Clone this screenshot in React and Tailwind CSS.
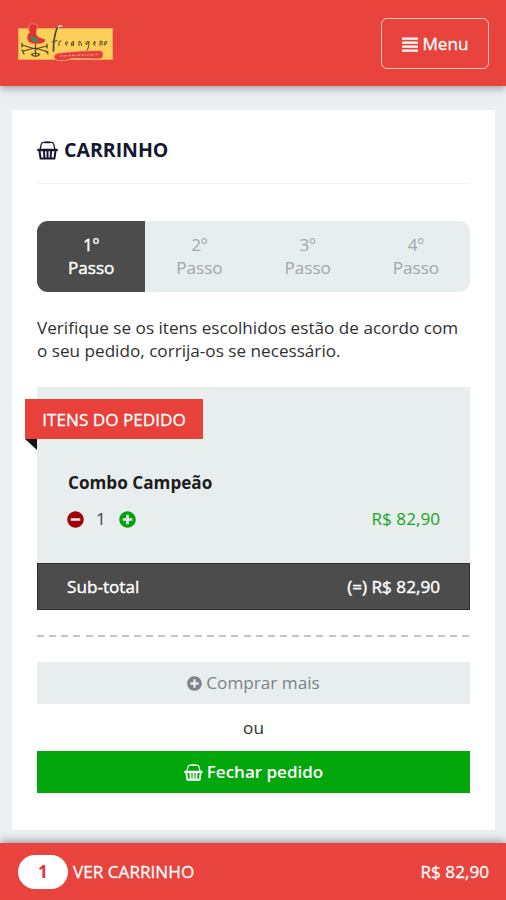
import { FaMinusCircle, FaPlusCircle } from 'react-icons/fa';

const STEPS = ['1º', '2º', '3º', '4º'];

function BasketIcon({ className }) {
  return (
    <svg viewBox="0 0 21 19" fill="none" stroke="currentColor" className={className} aria-hidden>
      <path d="M3.2 8l1.1-4.800q.5-1.900 2.400-1.900h7.600q1.900 0 2.400 1.900l1.100 4.800" strokeWidth="1.3" />
      <path d="M8.500 1.400h4" strokeWidth="1.800" strokeLinecap="round" />
      <path d="M1.300 8.900h18.400" strokeWidth="2.500" strokeLinecap="round" />
      <path d="M2.500 10l1.100 7.600h13.800l1.100-7.600M7 10l.4 7M10.500 10v7M14 10l-.4 7" strokeWidth="2" strokeLinejoin="round" />
    </svg>
  );
}

function MenuIcon() {
  return (
    <svg viewBox="0 0 16 15" fill="currentColor" className="h-[15px] w-4" aria-hidden>
      <rect y="0.5" width="16" height="2.3" rx="0.4" />
      <rect y="4.5" width="16" height="2.3" rx="0.4" />
      <rect y="8.5" width="16" height="2.3" rx="0.4" />
      <rect y="12.5" width="16" height="2.3" rx="0.4" />
    </svg>
  );
}

function Logo() {
  return (
    <svg viewBox="0 0 96 40" className="h-10 w-24" role="img" aria-label="Frangaria">
      <rect x="0.5" y="5.5" width="94" height="31" fill="#fbcf58" stroke="#f3a35c" />
      {/* weathervane */}
      <g fill="none" stroke="#4d4526" strokeWidth="1.2" strokeLinecap="round">
        <path d="M4 22l13 4 12-3M5 28l12-3 13 4M17.5 20v12M13.5 31.5q4-3 8 0q-4 3.5-8 0" />
        <path d="M4 20v4M4 27l2 4M29 21v4M28 28l2 3" />
      </g>
      {/* rooster */}
      <path
        d="M11 5q-1-3 1.500-3q1-2.500 3-1q3-1 4 2l-1 5q-1 4 2 6l7 2.500q0 4.500-9 4.500q-9 0-9.500-6q0-4 3-6l-1.500-1.500z"
        fill="#e6322e"
        stroke="#f9b68e"
        strokeWidth="0.5"
      />
      <path d="M12.500 13.500q3-1 5 1.500l3.500 2.500q-2 2-5 1q-3.500-1-3.500-5z" fill="#24946a" />
      {/* handwritten wordmark */}
      <g fill="none" stroke="#51482b" strokeLinecap="round" strokeLinejoin="round">
        <path d="M35.5 28q0-13 3-21.5q1-3 3-3" strokeWidth="1.7" />
        <path
          d="M34 19l5-1.5M41 22.5v-3.5q1-1 2-1M48 21.5q3-2 1-3q-3 1 0 4M55.5 18.5q-3 0-2 4q2 0 2-4v4M61 22.5v-4q2-1 2.5 4M70 18.5q-3 0-2 3q2 0 3-3q0 8-3 10M76 21.5q3-2 1-3q-3 1 0 4M82 22.5v-4q1-1 2 0"
          strokeWidth="1"
        />
        <path d="M86 18.500v3.500M90.500 18.500q-3 0-2 3.500q2 0 2-3.500" strokeWidth="1" transform="translate(-2)" />
      </g>
      <path d="M40 4.5q2-3 4-1" fill="none" stroke="#e3eee4" strokeWidth="1.4" />
      <path
        d="M37 31.500q2-1.500 8-2q16-2 37-2q4 1 3 5q0 3.500-5 3.500l-26-.5q-6 3-14 2q-3-.5-4-3q0-2 1-3z"
        fill="#e63f3b"
        stroke="#f6b07c"
        strokeWidth="0.8"
      />
      <path d="M42 33l38-1.500" stroke="#f28a78" strokeWidth="1.4" strokeDasharray="2 1 3 1 1 1" />
    </svg>
  );
}

function Header() {
  return (
    <header className="relative flex h-[86px] items-center justify-between bg-[#e8433d] pr-[17px] pl-[18px] shadow-[0_2px_8px_rgba(0,0,0,0.35)]">
      <Logo />
      <button className="mt-px flex h-[51px] w-[108px] items-center justify-center gap-1 rounded-md border-[1.5px] border-[#fdc5be] pt-px pl-px text-white [-webkit-text-stroke:0.3px]">
        <MenuIcon />
        <span>Menu</span>
      </button>
    </header>
  );
}

function Steps() {
  return (
    <ol className="mt-[37px] flex h-[71px] overflow-hidden rounded-[11px] bg-[#e8edee] pb-0 text-center leading-[23px]">
      {STEPS.map((step, i) => (
        <li
          key={step}
          className={
            i === 0
              ? 'flex flex-1 flex-col justify-center bg-[#4c4c4c] pb-0.5 text-white [-webkit-text-stroke:0.4px]'
              : 'flex flex-1 flex-col justify-center pb-0.5 text-[#a3a6a7]'
          }
        >
          <span>{step}</span>
          <span>Passo</span>
        </li>
      ))}
    </ol>
  );
}

function OrderItems() {
  return (
    <section className="relative mt-[25px] bg-[#e8edee]">
      <div className="h-[176px] px-[30px] pt-[84px]">
        <h2 className="pl-px leading-6 font-bold text-[#1c1c1c]">Combo Campeão</h2>
        <div className="mt-3 flex items-center leading-6">
          <FaMinusCircle className="size-[17px] text-[#9d0508]" />
          <span className="ml-3 text-[#444]">1</span>
          <FaPlusCircle className="ml-[13px] size-[17px] text-[#07a10d]" />
          <span className="ml-auto text-[#16a51d]">R$ 82,90</span>
        </div>
      </div>
      <div className="flex h-[47px] items-center justify-between border border-[#2e2e2e] bg-[#4c4c4c] px-[29px] pt-px text-white [-webkit-text-stroke:0.4px]">
        <span>Sub-total</span>
        <span>(=) R$ 82,90</span>
      </div>
      <div className="absolute top-3 -left-3">
        <div className="flex h-10 w-[178px] items-center justify-center bg-[#e8403b] pt-px text-white [-webkit-text-stroke:0.3px]">
          ITENS DO PEDIDO
        </div>
        <div className="h-[11px] w-3 bg-[#161616] [clip-path:polygon(0_0,100%_0,100%_100%)]" />
      </div>
    </section>
  );
}

export default function App() {
  return (
    <div className="flex h-[900px] w-[506px] flex-col overflow-hidden bg-[#ebeff2] font-['Open_Sans',sans-serif] text-[17.15px] text-[#303030]">
      <Header />
      <main className="mx-3 mt-6 h-[720px] w-[483px] bg-white px-[25px]">
        <h1 className="flex h-[74px] items-center gap-1.5 border-b border-[#f0f0f0] pt-[7px] text-[19.5px] font-bold text-[#14182f]">
          <BasketIcon className="h-[19px] w-[21px]" />
          CARRINHO
        </h1>
        <Steps />
        <p className="mt-6 leading-[23px] whitespace-nowrap">
          Verifique se os itens escolhidos estão de acordo com
          <br />o seu pedido, corrija-os se necessário.
        </p>
        <OrderItems />
        <div className="mt-[25px] h-[2px] bg-[repeating-linear-gradient(90deg,#c4c4c4_0_7px,transparent_7px_12.15px)]" />
        <button className="mt-[25px] flex h-[42px] w-full items-center justify-center gap-1 bg-[#e8edee] text-[#7c8285]">
          <FaPlusCircle className="size-[15px]" />
          Comprar mais
        </button>
        <p className="flex h-[47px] items-center justify-center">ou</p>
        <button className="flex h-[42px] w-full items-center justify-center gap-1 bg-[#01a70b] text-[17px] font-semibold text-white">
          <BasketIcon className="h-[17px] w-[19px]" />
          Fechar pedido
        </button>
      </main>
      <footer className="relative mt-auto flex h-[57px] items-center bg-[#e8433d] pr-[17px] pl-[18px] text-white shadow-[0_-2px_8px_rgba(0,0,0,0.35)]">
        <span className="flex h-[34px] w-[50px] items-center justify-center rounded-full bg-white font-bold text-[#dc343b]">
          1
        </span>
        <span className="ml-[5px] [-webkit-text-stroke:0.3px]">VER CARRINHO</span>
        <span className="ml-auto [-webkit-text-stroke:0.3px]">R$ 82,90</span>
      </footer>
    </div>
  );
}
